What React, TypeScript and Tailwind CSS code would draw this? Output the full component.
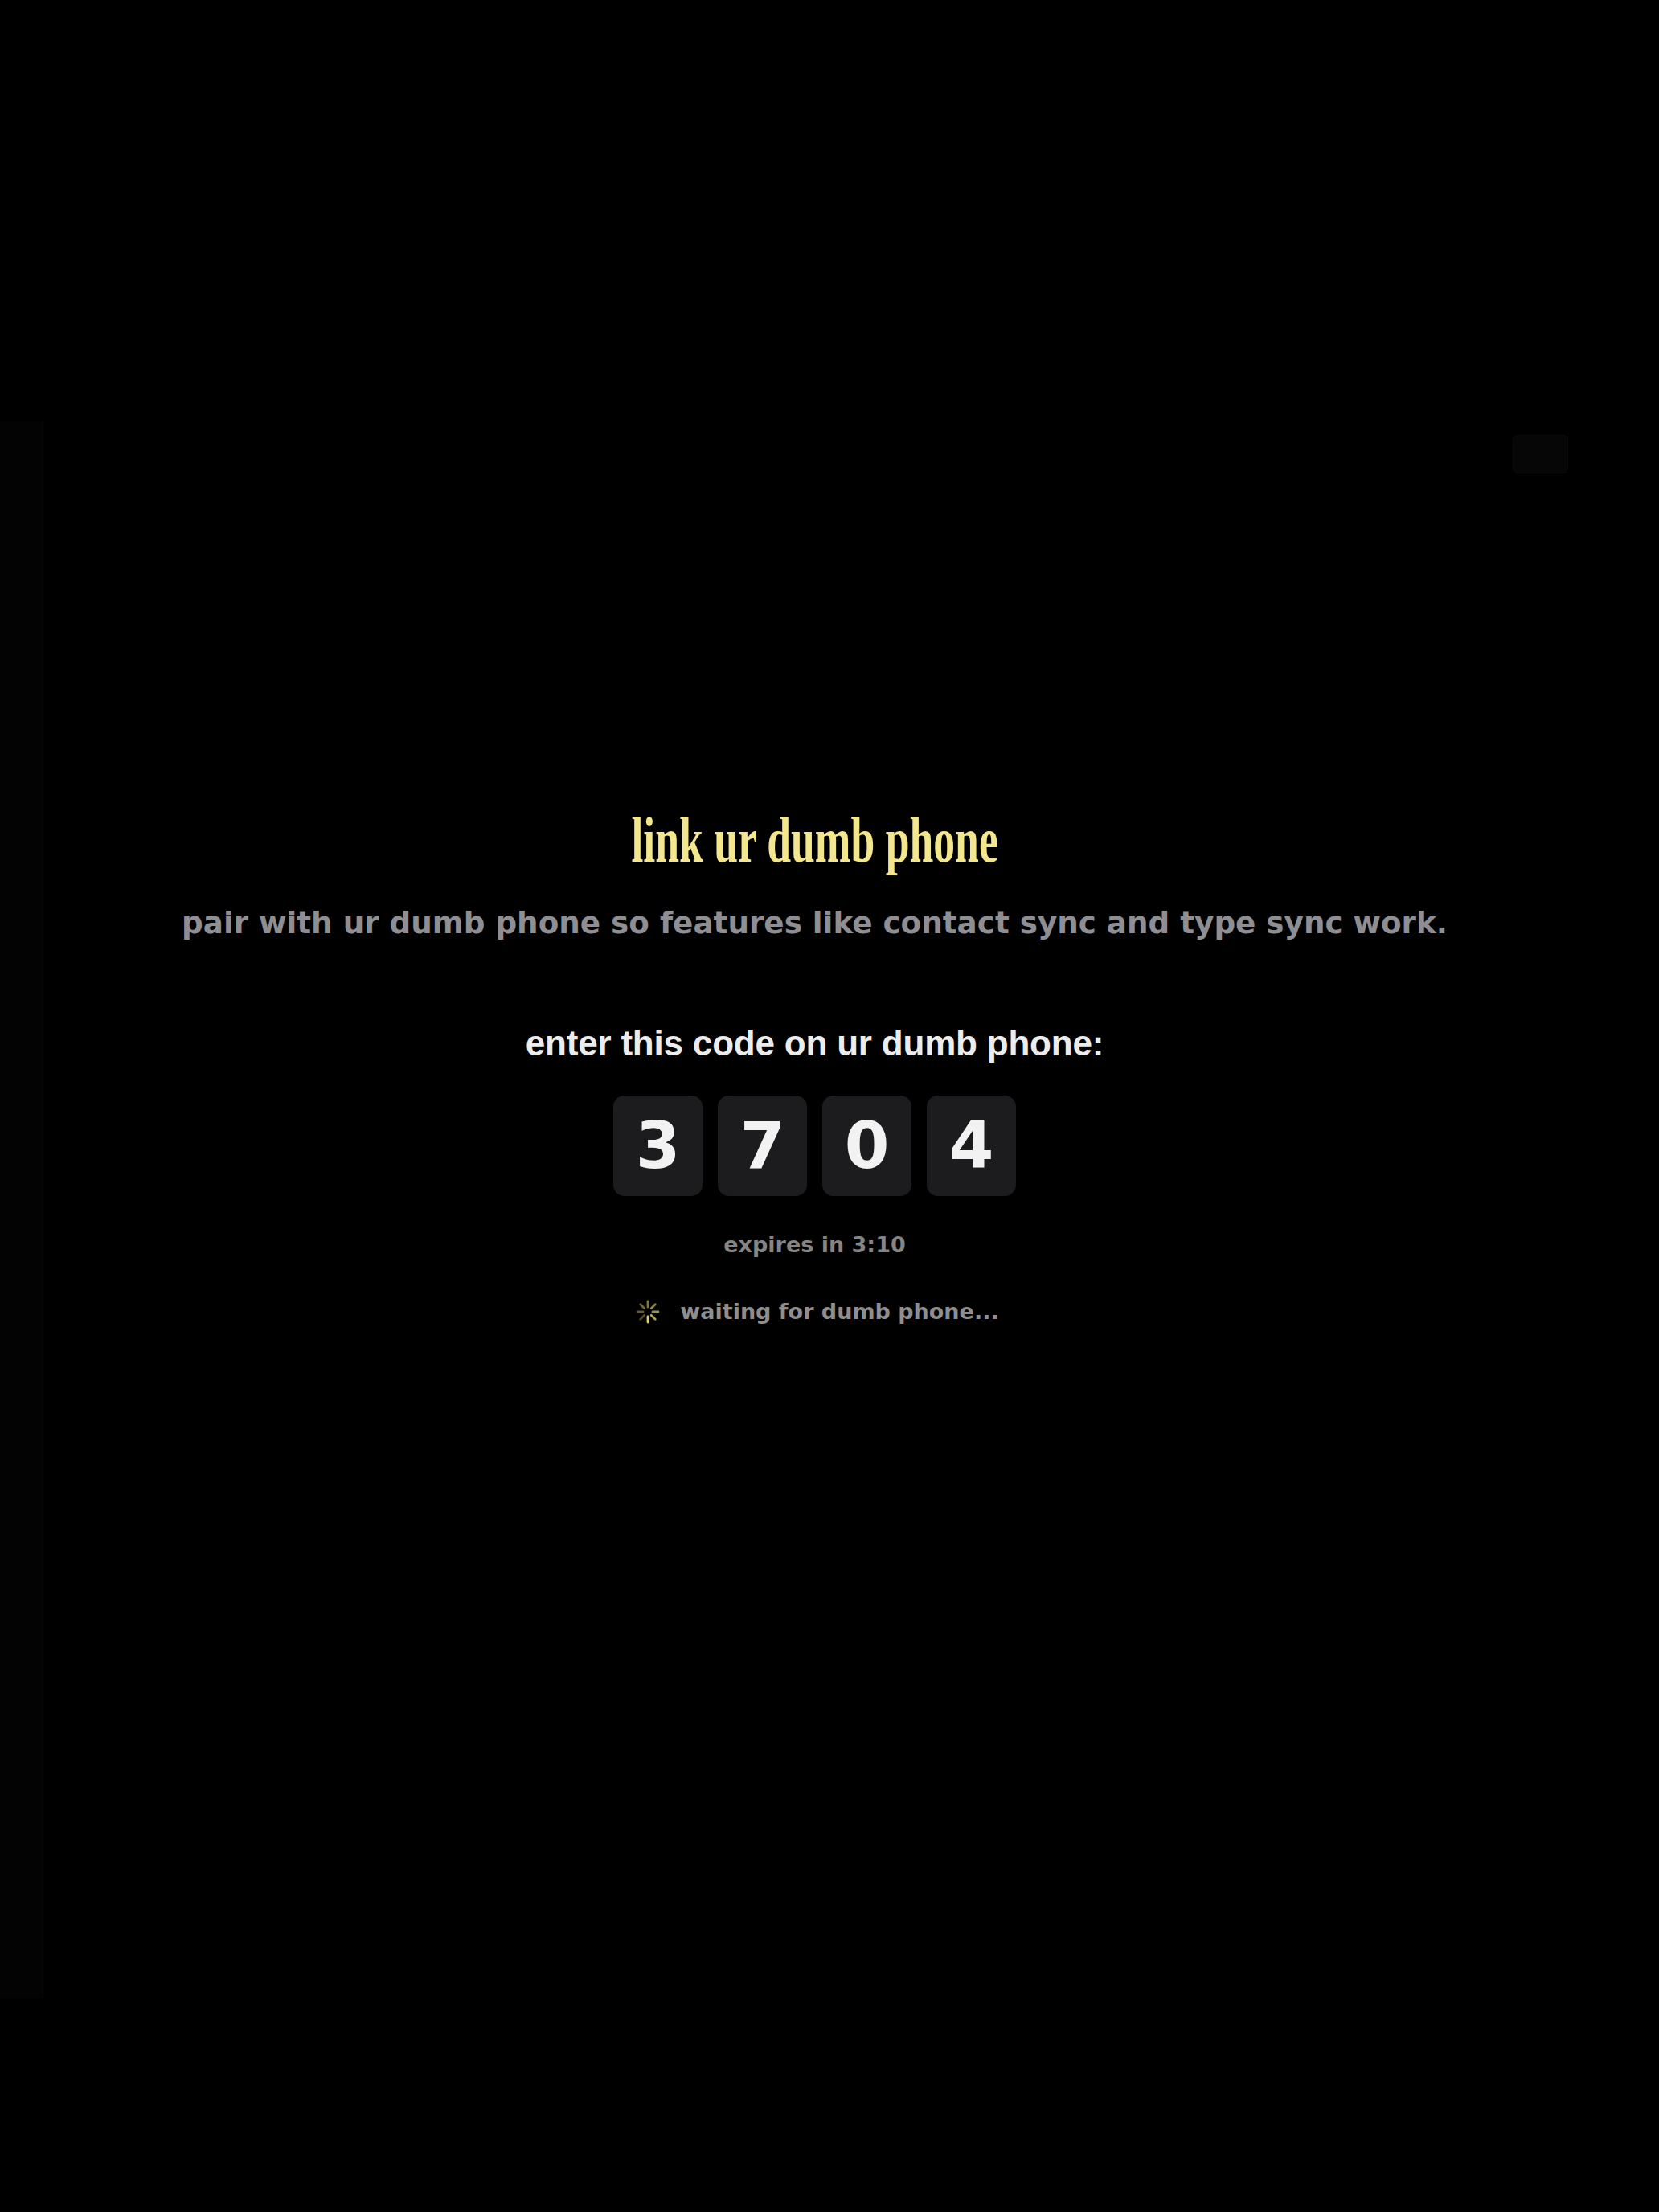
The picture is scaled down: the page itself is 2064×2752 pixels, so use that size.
import React from "react";

const code = ["3", "7", "0", "4"];

function Spinner() {
    // iOS-style activity indicator, 8 spokes
    const spokes = Array.from({ length: 8 }, (_, i) => i);
    return (
        <svg width="30" height="30" viewBox="0 0 30 30" className="shrink-0">
            {spokes.map((i) => {
                const angle = (i * 45 * Math.PI) / 180;
                const x1 = 15 + Math.sin(angle) * 6;
                const y1 = 15 + Math.cos(angle) * 6;
                const x2 = 15 + Math.sin(angle) * 13;
                const y2 = 15 + Math.cos(angle) * 13;
                return (
                    <line
                        key={i}
                        x1={x1}
                        y1={y1}
                        x2={x2}
                        y2={y2}
                        stroke="#dcd06a"
                        strokeWidth="2.8"
                        strokeLinecap="round"
                        opacity={i === 0 ? 1 : 0.3 + 0.07 * (8 - i)}
                    />
                );
            })}
        </svg>
    );
}

export default function App() {
    const heavy = { fontFamily: '"DejaVu Sans", Verdana, sans-serif' };

    return (
        <div className="relative w-[2064px] h-[2752px] bg-black overflow-hidden" style={{ fontFamily: '"Liberation Sans", Arial, sans-serif' }}>
            {/* faded sheet edges behind */}
            <div className="absolute left-0 top-[524px] w-[54px] h-[1963px] bg-[#030303] border-r border-[#070707]" />
            <div className="absolute left-[1882px] top-[541px] w-[69px] h-[48px] rounded-[6px] bg-[#060606] border border-[#0b0b0b]" />

            <main className="flex flex-col items-center pr-[37px] pt-[1005px]">
                {/* Header */}
                <h1
                    className="inline-block scale-x-[0.67] text-[80px] leading-[80px] font-bold text-[#f4e68c]"
                    style={{ fontFamily: '"Liberation Serif", "Times New Roman", serif' }}
                >
                    link ur dumb phone
                </h1>
                <p className="mt-[40px] text-[37.3px] leading-[47px] font-bold text-[#8e8e93]" style={heavy}>
                    pair with ur dumb phone so features like contact sync and type sync work.
                </p>

                {/* Pair code */}
                <p className="mt-[99px] text-[44px] leading-[53px] font-bold tracking-[-0.2px] text-[#ececec]">
                    enter this code on ur dumb phone:
                </p>
                <div className="mt-[39px] flex gap-[19px]">
                    {code.map((digit, index) => (
                        <div
                            key={index}
                            className="w-[111px] h-[125px] rounded-[14px] bg-[#1c1c1e] flex items-center justify-center text-[80px] leading-none font-bold text-[#f2f2f2]"
                            style={heavy}
                        >
                            {digit}
                        </div>
                    ))}
                </div>

                <p className="mt-[43px] text-[27px] leading-[35px] font-bold text-[#858585]" style={heavy}>
                    expires in 3:10
                </p>

                <div className="mt-[48px] flex items-center gap-[25px] pl-[7px]">
                    <Spinner />
                    <span className="text-[27px] leading-[36px] font-bold text-[#8e8e8e]" style={heavy}>
                        waiting for dumb phone...
                    </span>
                </div>
            </main>
        </div>
    );
}
